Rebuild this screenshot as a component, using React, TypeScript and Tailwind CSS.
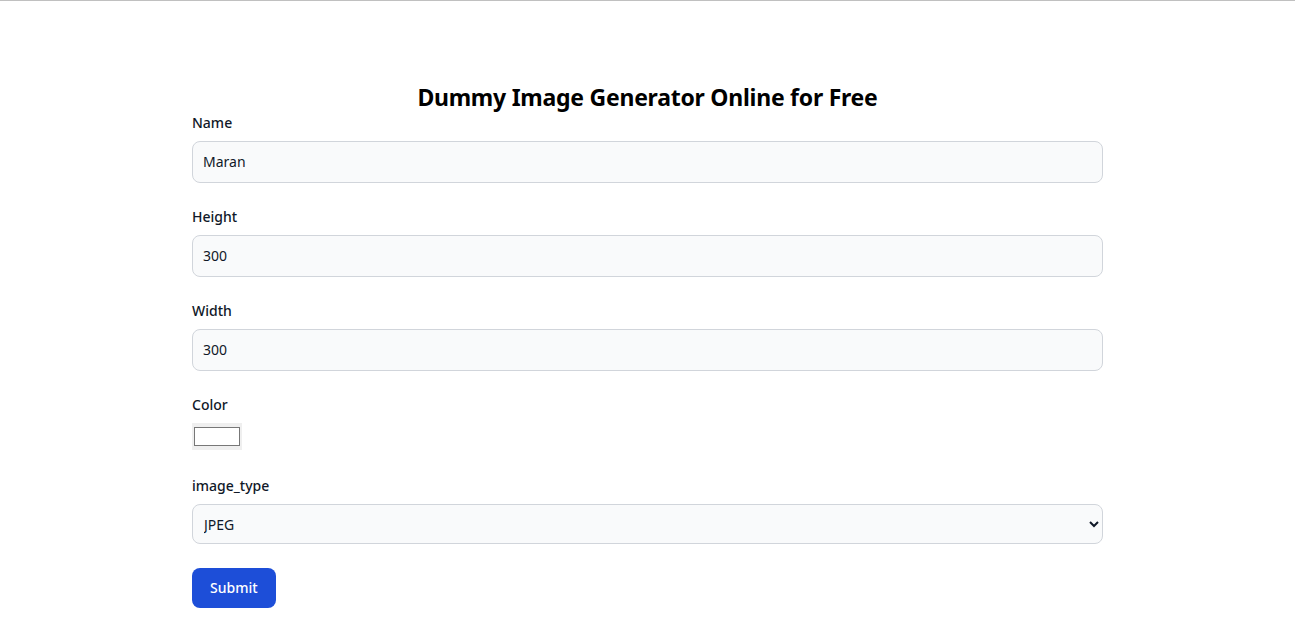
import React from "react";

const font = { fontFamily: '"Noto Sans", "Open Sans", sans-serif' };

function Field({ label, value }: { label: string; value: string }) {
  return (
    <div className="mb-6">
      <label className="block mb-2 text-sm font-medium text-gray-900">{label}</label>
      <input
        type="text"
        defaultValue={value}
        className="block w-full p-2.5 text-sm text-gray-900 bg-[#f9fafb] border border-[#d1d5db] rounded-lg outline-none"
      />
    </div>
  );
}

export default function App() {
  return (
    <div className="min-h-screen bg-white border-t border-[#c0c0c0]" style={font}>
      <div className="w-[911px] mx-auto pt-20">
        <h1 className="text-[23px] leading-8 tracking-[-0.25px] font-bold text-center text-black">
          Dummy Image Generator Online for Free
        </h1>
        <form onSubmit={(e) => e.preventDefault()}>
          <Field label="Name" value="Maran" />
          <Field label="Height" value="300" />
          <Field label="Width" value="300" />
          <div className="mb-[26px]">
            <label className="block mb-2 text-sm font-medium text-gray-900">Color</label>
            <input
              type="color"
              defaultValue="#ffffff"
              className="block w-[50px] h-[27px] bg-[#efefef] p-0"
            />
          </div>
          <div className="mb-6">
            <label className="block mb-2 text-sm font-medium text-gray-900">image_type</label>
            <select
              defaultValue="JPEG"
              className="block w-full h-10 pl-[7px] pr-1 text-sm text-gray-900 bg-[#f9fafb] border border-[#d1d5db] rounded-lg outline-none"
            >
              <option>JPEG</option>
              <option>PNG</option>
              <option>GIF</option>
            </select>
          </div>
          <button
            type="submit"
            className="text-white bg-[#1d4ed8] font-medium rounded-lg text-sm px-[18px] py-2.5 text-center"
          >
            Submit
          </button>
        </form>
      </div>
    </div>
  );
}
